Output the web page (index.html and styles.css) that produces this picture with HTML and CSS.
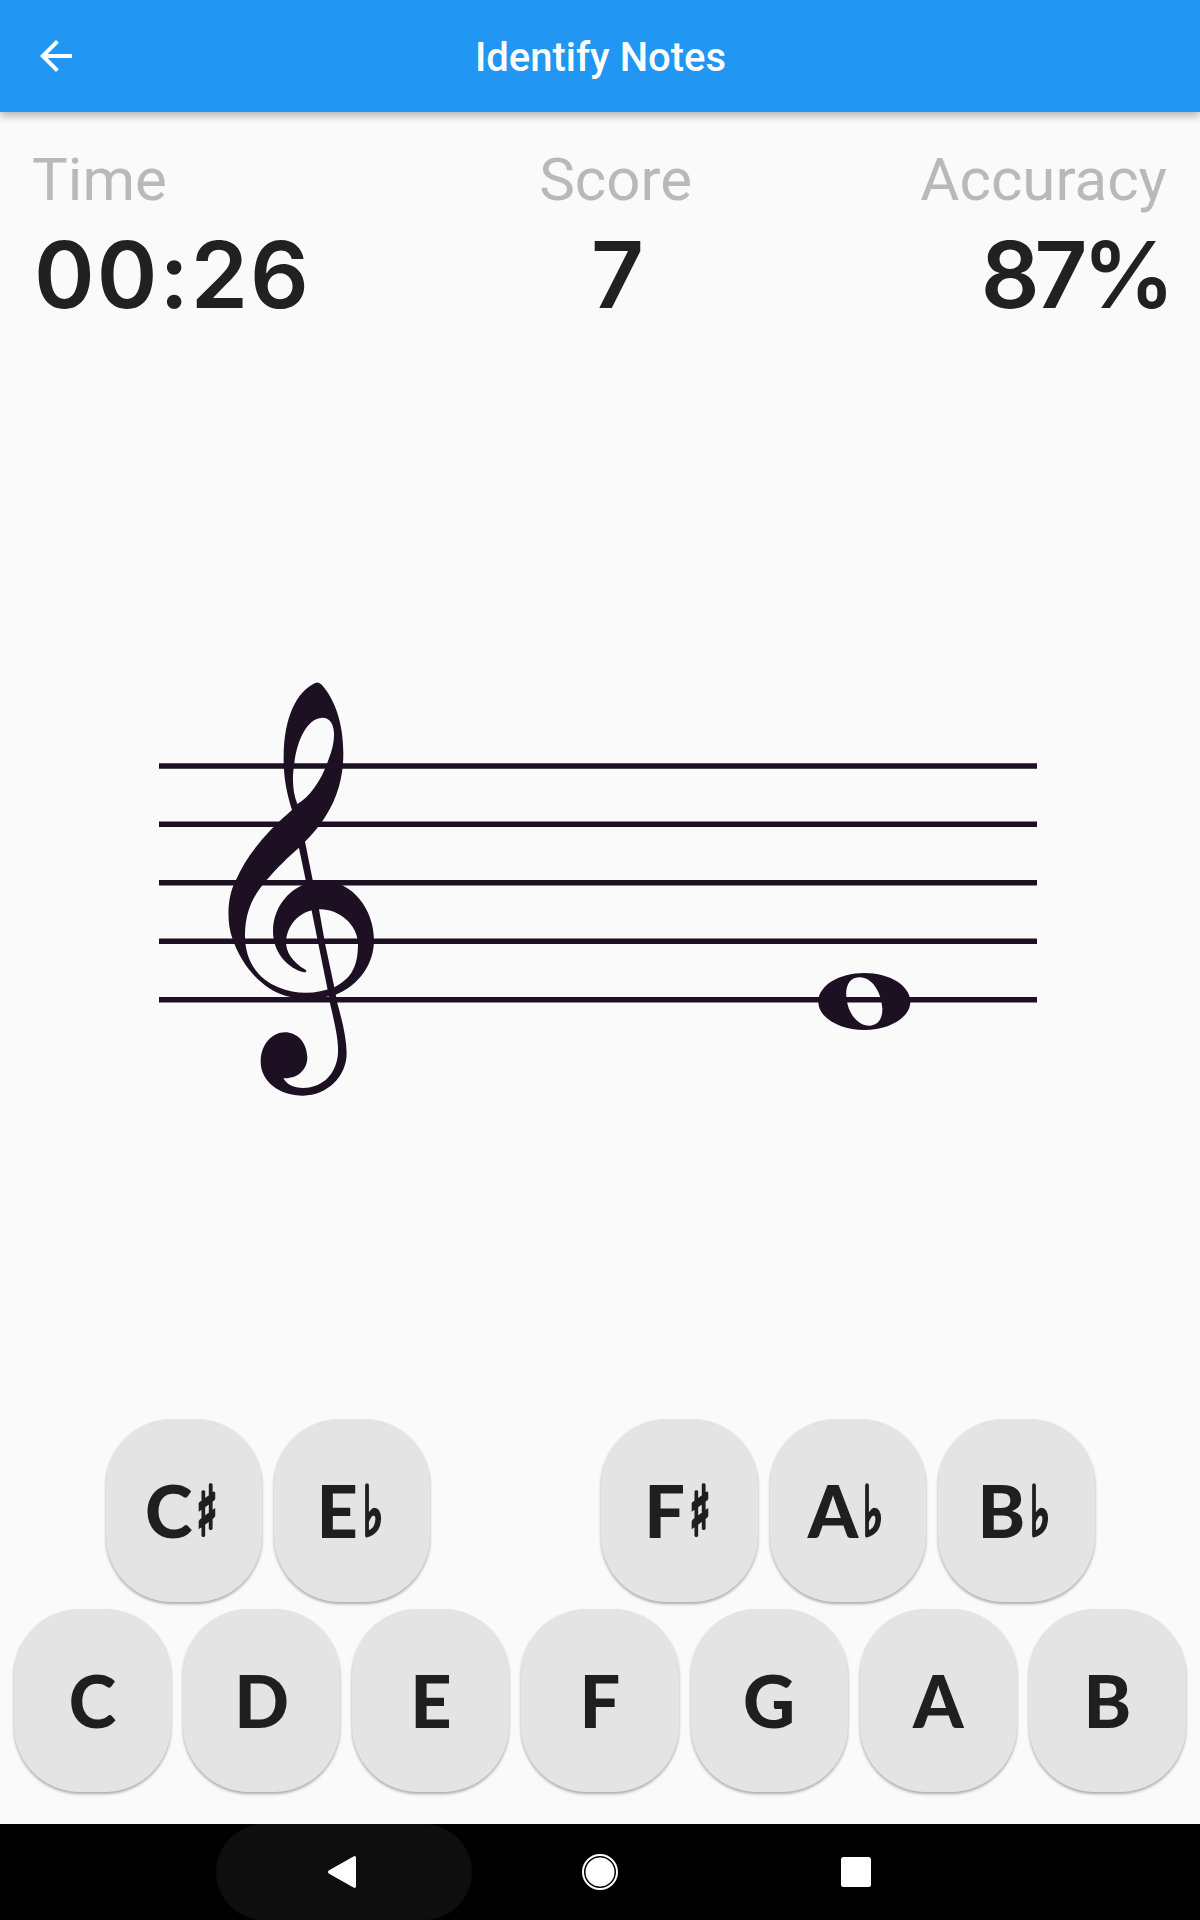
FILE: index.html
```html
<!DOCTYPE html>
<html lang="en">
<head>
    <meta charset="UTF-8">
    <meta name="viewport" content="width=device-width, initial-scale=1.0">
    <title>Identify Notes</title>
    <link rel="stylesheet" href="styles.css">
</head>
<body>
    <header class="app-bar">
        <svg class="back-icon" viewBox="0 0 24 24"><path d="M20 11H7.83l5.59-5.59L12 4l-8 8 8 8 1.41-1.41L7.83 13H20v-2z"/></svg>
        <h1>Identify Notes</h1>
    </header>

    <section class="stats">
        <div class="stat stat-time">
            <span class="label">Time</span>
            <span class="value">00:26</span>
        </div>
        <div class="stat stat-score">
            <span class="label">Score</span>
            <span class="value">7</span>
        </div>
        <div class="stat stat-accuracy">
            <span class="label">Accuracy</span>
            <span class="value">87%</span>
        </div>
    </section>

    <main class="stage">
        <svg class="staff" viewBox="159 680 878 418">
            <!-- staff lines -->
            <path class="lines" d="M159 766H1037M159 824.3H1037M159 882.7H1037M159 941.3H1037M159 999.7H1037"/>
            <!-- treble clef -->
            <g transform="translate(200 660) scale(0.33333)">
                <path fill-rule="evenodd" d="M346 69C290 95 252 170 251 290C250 350 260 400 276 450C200 515 140 585 108 660C80 710 80 790 97 835C125 920 190 990 258 1008C300 1018 365 1016 405 1005C480 975 522 910 522 840C522 750 460 662 365 662C280 664 218 735 219 815C220 880 265 925 312 937Q322 938 318 930C275 905 258 875 258 845C262 790 305 748 360 748C420 748 472 795 474 850C474 920 455 955 403 982C350 1003 290 1005 235 982C170 955 133 900 135 820C137 745 165 700 200 660C230 625 265 590 297 563L315 545C335 525 350 508 365 487C405 430 430 365 430 280C430 190 405 120 366 75Q356 64 346 69ZM367 173C320 175 290 245 283 310C275 360 279 400 292 432C330 410 365 360 385 300C412 235 408 173 367 173Z"/>
                <path d="M294 550L317 660L335 752L383 990L390 1030C405 1095 416 1140 414 1180C410 1240 370 1283 310 1284C280 1283 262 1275 250 1255C295 1257 322 1228 322 1192C320 1145 290 1117 255 1117C215 1117 182 1155 182 1205C182 1265 240 1307 310 1307C380 1307 440 1250 440 1180C439 1130 426 1080 412 1030L403 982L376 855L357 748L338 660L314 540Z"/>
            </g>
            <!-- whole note -->
            <g transform="translate(780 940) scale(0.33333)">
                <path fill-rule="evenodd" d="M115 185C115 137 177 99 253 99C329 99 391 137 391 185C391 232 329 270 253 270C177 270 115 232 115 185ZM237 112C210 113 196 135 199 170C202 215 230 257 268 257C295 256 308 235 307 205C304 155 275 110 237 112Z"/>
            </g>
        </svg>
    </main>

    <section class="keyboard">
        <div class="key-row sharps">
            <button class="key">C<span class="accidental">♯</span></button>
            <button class="key">E<span class="accidental">♭</span></button>
            <div class="spacer"></div>
            <button class="key">F<span class="accidental">♯</span></button>
            <button class="key">A<span class="accidental">♭</span></button>
            <button class="key">B<span class="accidental">♭</span></button>
        </div>
        <div class="key-row">
            <button class="key">C</button>
            <button class="key">D</button>
            <button class="key">E</button>
            <button class="key">F</button>
            <button class="key">G</button>
            <button class="key">A</button>
            <button class="key">B</button>
        </div>
    </section>

    <nav class="nav-bar">
        <div class="nav-item active">
            <svg viewBox="0 0 48 48"><path d="M8.700 22.6L33.500 8.400Q36 7 36 10V38Q36 41 33.500 39.6L8.700 25.4Q7 24 8.700 22.600Z"/></svg>
        </div>
        <div class="nav-item">
            <svg viewBox="0 0 48 48"><circle cx="24" cy="24" r="14.500"/><circle class="ring" cx="24" cy="24" r="17"/></svg>
        </div>
        <div class="nav-item">
            <svg viewBox="0 0 48 48"><rect x="9" y="9" width="30" height="30" rx="2.500"/></svg>
        </div>
    </nav>
</body>
</html>
```
FILE: styles.css
```css
* {
    box-sizing: border-box;
}

body {
    margin: 0;
    height: 1920px;
    display: flex;
    flex-direction: column;
    background-color: #fafafa;
    color: #212121;
    font-family: Roboto, sans-serif;
}

.app-bar {
    display: grid;
    grid-template-columns: 80px 1fr 80px;
    align-items: center;
    height: 112px;
    padding: 0 32px;
    background-color: #2196f3;
    color: #fff;
    box-shadow: 0 4px 8px rgba(0, 0, 0, 0.28);
}

.app-bar h1 {
    margin: 0;
    padding: 2px 0 0 1px;
    font-size: 40px;
    font-weight: 500;
    text-align: center;
    white-space: nowrap;
}

.back-icon {
    width: 48px;
    height: 48px;
    fill: #fff;
}

.stats {
    display: flex;
    justify-content: space-between;
    height: 220px;
    padding: 32px 33px 0 32px;
}

.stat {
    display: flex;
    flex-direction: column;
    align-items: center;
}

.stat-time {
    align-items: flex-start;
}

.stat-accuracy {
    align-items: flex-end;
}

.label {
    font-size: 60px;
    line-height: 72px;
    color: #b9b9b9;
}

.value {
    font-family: Inter, sans-serif;
    font-size: 92px;
    font-weight: 600;
    line-height: 117px;
}

.stat-time .value {
    padding-left: 2px;
    letter-spacing: 2px;
}

.stat-score .value {
    padding-left: 4px;
}

.stat-accuracy .value {
    margin-right: -3px;
    letter-spacing: -5px;
}

.stage {
    flex: 1;
    padding: 348px 0 0 159px;
}

.staff {
    display: block;
    width: 878px;
    height: 418px;
    fill: #1c1022;
}

.lines {
    fill: none;
    stroke: #1c1022;
    stroke-width: 5.5;
}

.keyboard {
    display: flex;
    flex-direction: column;
    gap: 7px;
    padding: 0 14px 32px;
}

.key-row {
    display: flex;
    gap: 12px;
}

.sharps {
    padding: 0 91.5px;
}

.spacer {
    width: 147px;
}

.key {
    flex: 1;
    display: flex;
    align-items: center;
    justify-content: center;
    height: 183px;
    padding: 0 0 2px;
    border: none;
    border-radius: 66px;
    background-color: #e4e4e4;
    color: #1f1f1f;
    font-family: Lato, sans-serif;
    font-size: 72px;
    font-weight: 900;
    box-shadow: 0 2px 3px rgba(0, 0, 0, 0.32);
}

.accidental {
    display: flex;
    justify-content: center;
    width: 30px;
    padding-top: 5px;
    font-family: "DejaVu Sans", sans-serif;
    font-size: 68px;
    line-height: 72px;
    font-weight: 400;
    transform: scaleX(0.65);
    -webkit-text-stroke: 4px #1f1f1f;
}

.nav-bar {
    display: flex;
    justify-content: center;
    height: 96px;
    background-color: #000;
}

.nav-item {
    display: flex;
    align-items: center;
    justify-content: center;
    width: 256px;
    border-radius: 48px;
}

.nav-item.active {
    background-color: #0e0e0e;
}

.nav-item svg {
    width: 48px;
    height: 48px;
    fill: #fff;
}

.nav-item .ring {
    fill: none;
    stroke: #fff;
    stroke-width: 2;
}
```
